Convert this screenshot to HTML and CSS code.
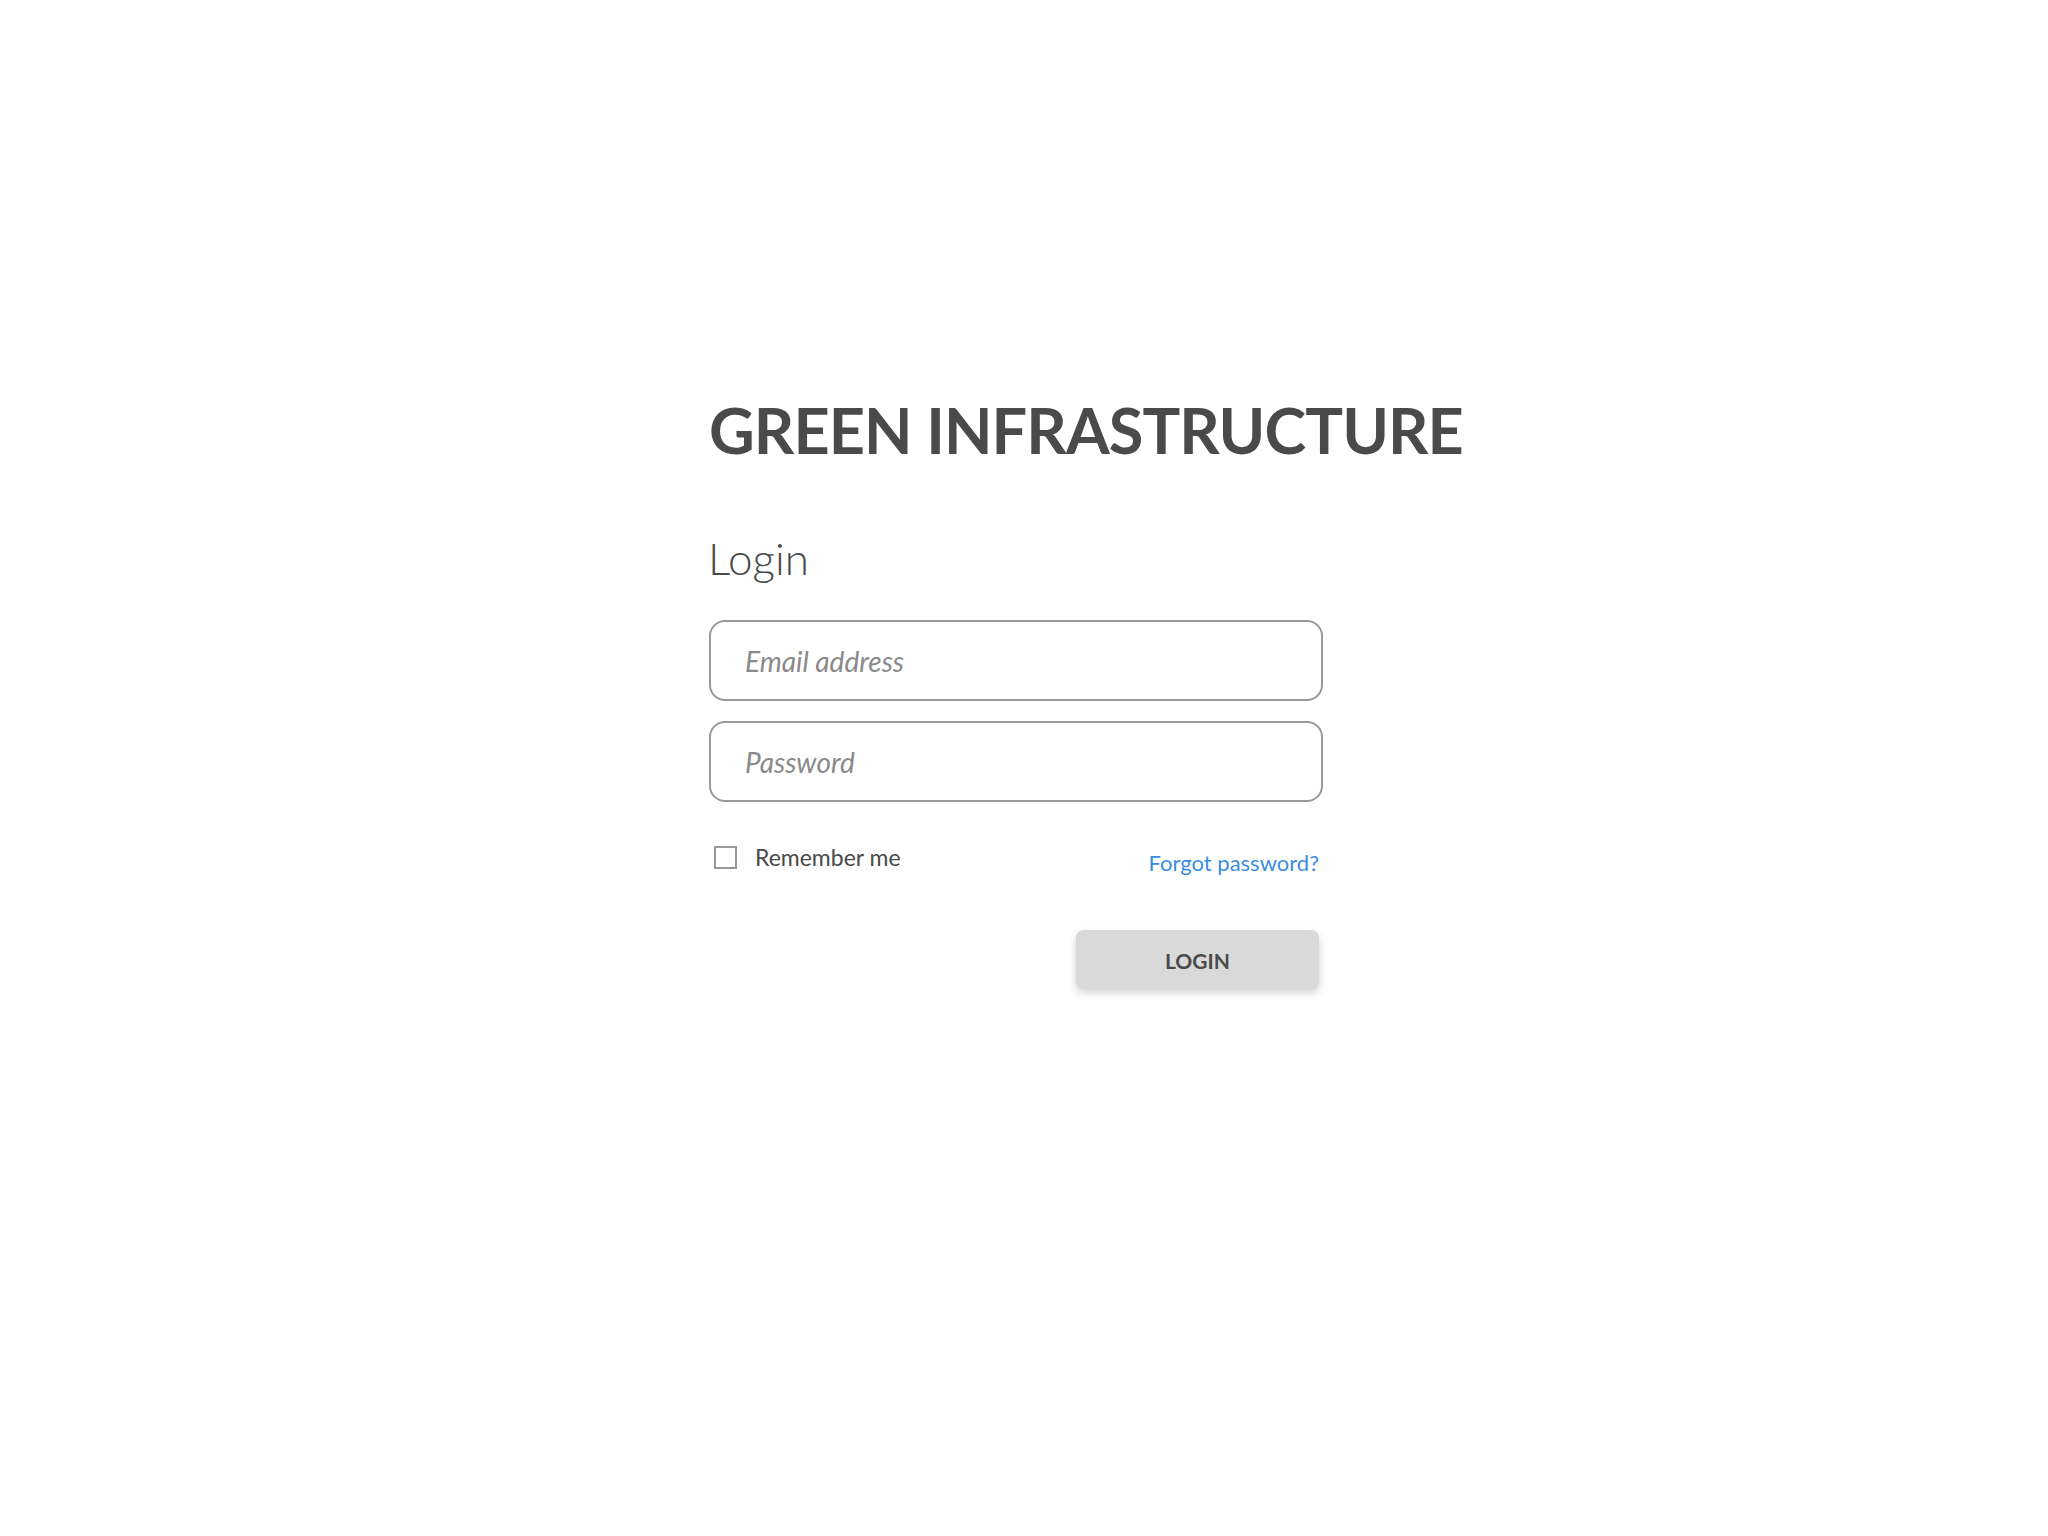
FILE: index.html
```html
<!DOCTYPE html>
<html lang="en">
<head>
<meta charset="utf-8">
<title>Green Infrastructure - Login</title>
<link rel="stylesheet" href="styles.css">
</head>
<body>
<main class="page">
  <div class="panel">
    <h1 class="brand">GREEN INFRASTRUCTURE</h1>
    <form class="login-form">
      <h2 class="form-title">Login</h2>
      <div class="field"><input class="input" type="email" placeholder="Email address"></div>
      <div class="field"><input class="input" type="password" placeholder="Password"></div>
      <div class="options">
        <label class="remember"><span class="checkbox"></span><span class="remember-text">Remember me</span></label>
        <a class="forgot" href="#">Forgot password?</a>
      </div>
      <div class="actions">
        <button class="btn-login" type="button">LOGIN</button>
      </div>
    </form>
  </div>
</main>
</body>
</html>
```
FILE: styles.css
```css
* { box-sizing: border-box; }
html, body { margin: 0; padding: 0; background: #ffffff; }
body {
  font-family: Lato, "Open Sans", "Liberation Sans", sans-serif;
  color: #4a4a4a;
  width: 2048px;
  height: 1536px;
}
.page {
  padding-top: 392px;
  padding-left: 709px;
}
.panel {
  display: flex;
  flex-direction: column;
  align-items: flex-start;
}
.brand {
  margin: 0;
  font-size: 63px;
  line-height: 76px;
  font-weight: 700;
  color: #4a4a4a;
  letter-spacing: -0.9px;
  white-space: nowrap;
}
.login-form {
  width: 614px;
  display: flex;
  flex-direction: column;
  margin-top: 64px;
}
.form-title {
  margin: 0 0 0 -1px;
  font-size: 44px;
  line-height: 52px;
  font-weight: 300;
  color: #4a4a4a;
}
.field { margin-top: 20px; }
.login-form .field:first-of-type { margin-top: 36px; }
.input {
  display: block;
  width: 100%;
  height: 81px;
  border: 2px solid #999999;
  border-radius: 16px;
  padding: 0 34px;
  font-family: Lato, "Open Sans", sans-serif;
  font-size: 28px;
  font-style: italic;
  color: #555;
  background: #fff;
  outline: none;
}
.input::placeholder { color: #8a8a8a; font-style: italic; }
.options {
  display: flex;
  justify-content: space-between;
  align-items: flex-start;
  margin-top: 42px;
  padding-left: 5px;
  padding-right: 4px;
}
.remember {
  display: flex;
  align-items: center;
  gap: 18px;
}
.checkbox {
  width: 23px;
  height: 23px;
  border: 2px solid #999999;
  background: #fff;
}
.remember-text {
  font-size: 23px;
  color: #4a4a4a;
  line-height: 26px;
}
.forgot {
  font-size: 22px;
  line-height: 26px;
  color: #3b8de0;
  text-decoration: none;
  margin-top: 6px;
}
.actions {
  display: flex;
  justify-content: flex-end;
  margin-top: 54px;
  padding-right: 4px;
}
.btn-login {
  width: 243px;
  height: 59px;
  border: none;
  border-radius: 8px;
  background: #d9d9d9;
  box-shadow: 0 4px 8px rgba(0,0,0,0.18);
  font-family: Lato, "Open Sans", sans-serif;
  font-weight: 700;
  font-size: 21px;
  color: #4a4a4a;
  padding-top: 3px;
}
```
